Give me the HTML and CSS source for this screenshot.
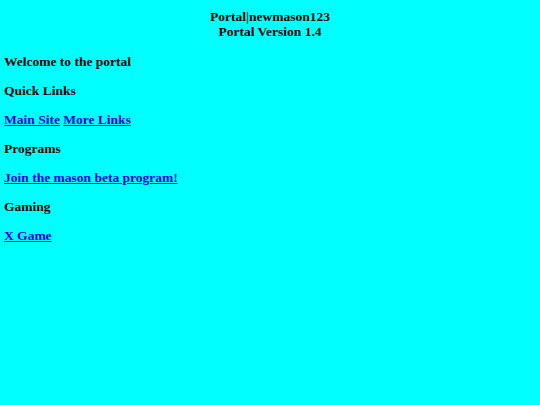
FILE: index.html
```html
<!DOCTYPE html>
<html>
<head>
<meta charset="utf-8">
<title>Portal</title>
<link rel="stylesheet" href="styles.css">
</head>
<body>
<div class="header">
  <div>Portal|newmason123</div>
  <div>Portal Version 1.4</div>
</div>
<p class="line">Welcome to the portal</p>
<p class="line">Quick Links</p>
<p class="line"><a href="#">Main Site</a> <a href="#">More Links</a></p>
<p class="line">Programs</p>
<p class="line"><a href="#">Join the mason beta program!</a></p>
<p class="line">Gaming</p>
<p class="line"><a href="#">X Game</a></p>
</body>
</html>
```
FILE: styles.css
```css
html, body {
  background: #00ffff;
}
body {
  margin: 0;
  padding: 9px 4px 0 4px;
  font-family: "Liberation Serif", "Times New Roman", serif;
  font-weight: bold;
  font-size: 13.5px;
  line-height: 15px;
  color: #000;
}
.header {
  text-align: center;
  padding-bottom: 1px;
}
.line {
  margin: 14px 0 0 0;
}
a {
  color: #0000ee;
  text-decoration: underline;
}
```
